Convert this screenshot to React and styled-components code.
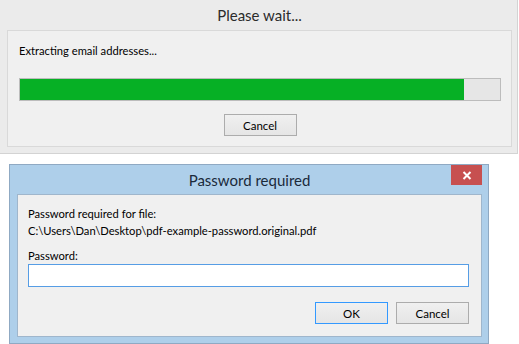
import React from 'react';
import styled, { createGlobalStyle } from 'styled-components';

const Global = createGlobalStyle`
  html, body {
    margin: 0;
    padding: 0;
    background: #ffffff;
  }
  body {
    font-family: Lato, "Noto Sans", sans-serif;
    font-size: 11.2px;
    color: #000;
  }
`;

const Page = styled.div`
  width: 519px;
  height: 344px;
  overflow: hidden;
  display: flex;
  flex-direction: column;
`;

const Window = styled.div`
  position: relative;
  box-sizing: border-box;
  display: flex;
  flex-direction: column;
  width: ${p => p.$w}px;
  height: ${p => p.$h}px;
  margin-left: ${p => p.$left || 0}px;
  margin-top: ${p => p.$top || 0}px;
  background: ${p => p.$frame};
  border: 1px solid ${p => p.$edge};
  border-left-width: ${p => (p.$noLeft ? 0 : 1)}px;
  border-top-width: ${p => (p.$noTop ? 0 : 1)}px;
  padding: 0 ${p => p.$padR}px ${p => p.$padB}px ${p => p.$padL}px;
`;

const TitleBar = styled.div`
  height: ${p => p.$h}px;
  flex: none;
  display: flex;
  align-items: center;
  justify-content: center;
  font-size: 15px;
  color: ${p => p.$color};
`;

const CloseButton = styled.button`
  position: absolute;
  top: 0;
  right: 6px;
  width: 31px;
  height: 20px;
  border: 0;
  padding: 0;
  margin: 0;
  background: #c75050;
  display: flex;
  align-items: center;
  justify-content: center;
`;

const Panel = styled.div`
  flex: 1;
  box-sizing: border-box;
  background: #f0f0f0;
  border: 1px solid ${p => p.$edge};
  display: flex;
  flex-direction: column;
  padding: ${p => p.$pad};
`;

const Label = styled.div`
  line-height: 17px;
  height: 17px;
  white-space: nowrap;
  margin-top: ${p => p.$mt || 0}px;
`;

const ProgressTrack = styled.div`
  box-sizing: border-box;
  height: 23px;
  margin-top: 19px;
  background: #e6e6e6;
  border: 1px solid #bcbcbc;
  display: flex;
`;

const ProgressFill = styled.div`
  background: #06b025;
  height: 100%;
`;

const ButtonRow = styled.div`
  display: flex;
  justify-content: ${p => p.$justify};
  gap: 8px;
  margin-top: ${p => p.$mt}px;
`;

const Button = styled.button`
  box-sizing: border-box;
  width: 73px;
  height: 22px;
  padding: 0;
  font-family: Lato, "Noto Sans", sans-serif;
  font-size: 11.5px;
  color: #000;
  border: 1px solid ${p => (p.$default ? '#3399ff' : '#acacac')};
  background: linear-gradient(#f0f0f0, #e5e5e5);
`;

const Input = styled.input`
  box-sizing: border-box;
  height: 23px;
  border: 1px solid #569de5;
  background: #fff;
  outline: none;
  padding: 0 4px;
`;

export default function App() {
  const progress = 0.925;
  return (
    <Page>
      <Global />
      <Window
        $w={518}
        $h={154}
        $frame="#ebebeb"
        $edge="#d3d3d3"
        $noLeft
        $noTop
        $padL={7}
        $padR={5}
        $padB={6}
      >
        <TitleBar $h={30} $color="#2b2b2b">Please wait...</TitleBar>
        <Panel $edge="#d9d9d9" $pad="11px 10px 0 11px">
          <Label>Extracting email addresses...</Label>
          <ProgressTrack>
            <ProgressFill style={{ width: `${progress * 100}%` }} />
          </ProgressTrack>
          <ButtonRow $justify="center" $mt={13}>
            <Button>Cancel</Button>
          </ButtonRow>
        </Panel>
      </Window>

      <Window
        $w={480}
        $h={180}
        $left={9}
        $top={10}
        $frame="#aecfea"
        $edge="#8fa9c3"
        $padL={7}
        $padR={6}
        $padB={6}
      >
        <TitleBar $h={29} $color="#1b2a3a">Password required</TitleBar>
        <CloseButton aria-label="Close">
          <svg width="10" height="9" viewBox="0 0 10 9">
            <path d="M1.5 1 L8.5 8 M8.5 1 L1.5 8" stroke="#fff" strokeWidth="2" />
          </svg>
        </CloseButton>
        <Panel $edge="#9fb6cc" $pad="10px 12px 0 10px">
          <Label>Password required for file:</Label>
          <Label>C:\Users\Dan\Desktop\pdf-example-password.original.pdf</Label>
          <Label $mt={8}>Password:</Label>
          <Input type="password" />
          <ButtonRow $justify="flex-end" $mt={15}>
            <Button $default>OK</Button>
            <Button>Cancel</Button>
          </ButtonRow>
        </Panel>
      </Window>
    </Page>
  );
}
